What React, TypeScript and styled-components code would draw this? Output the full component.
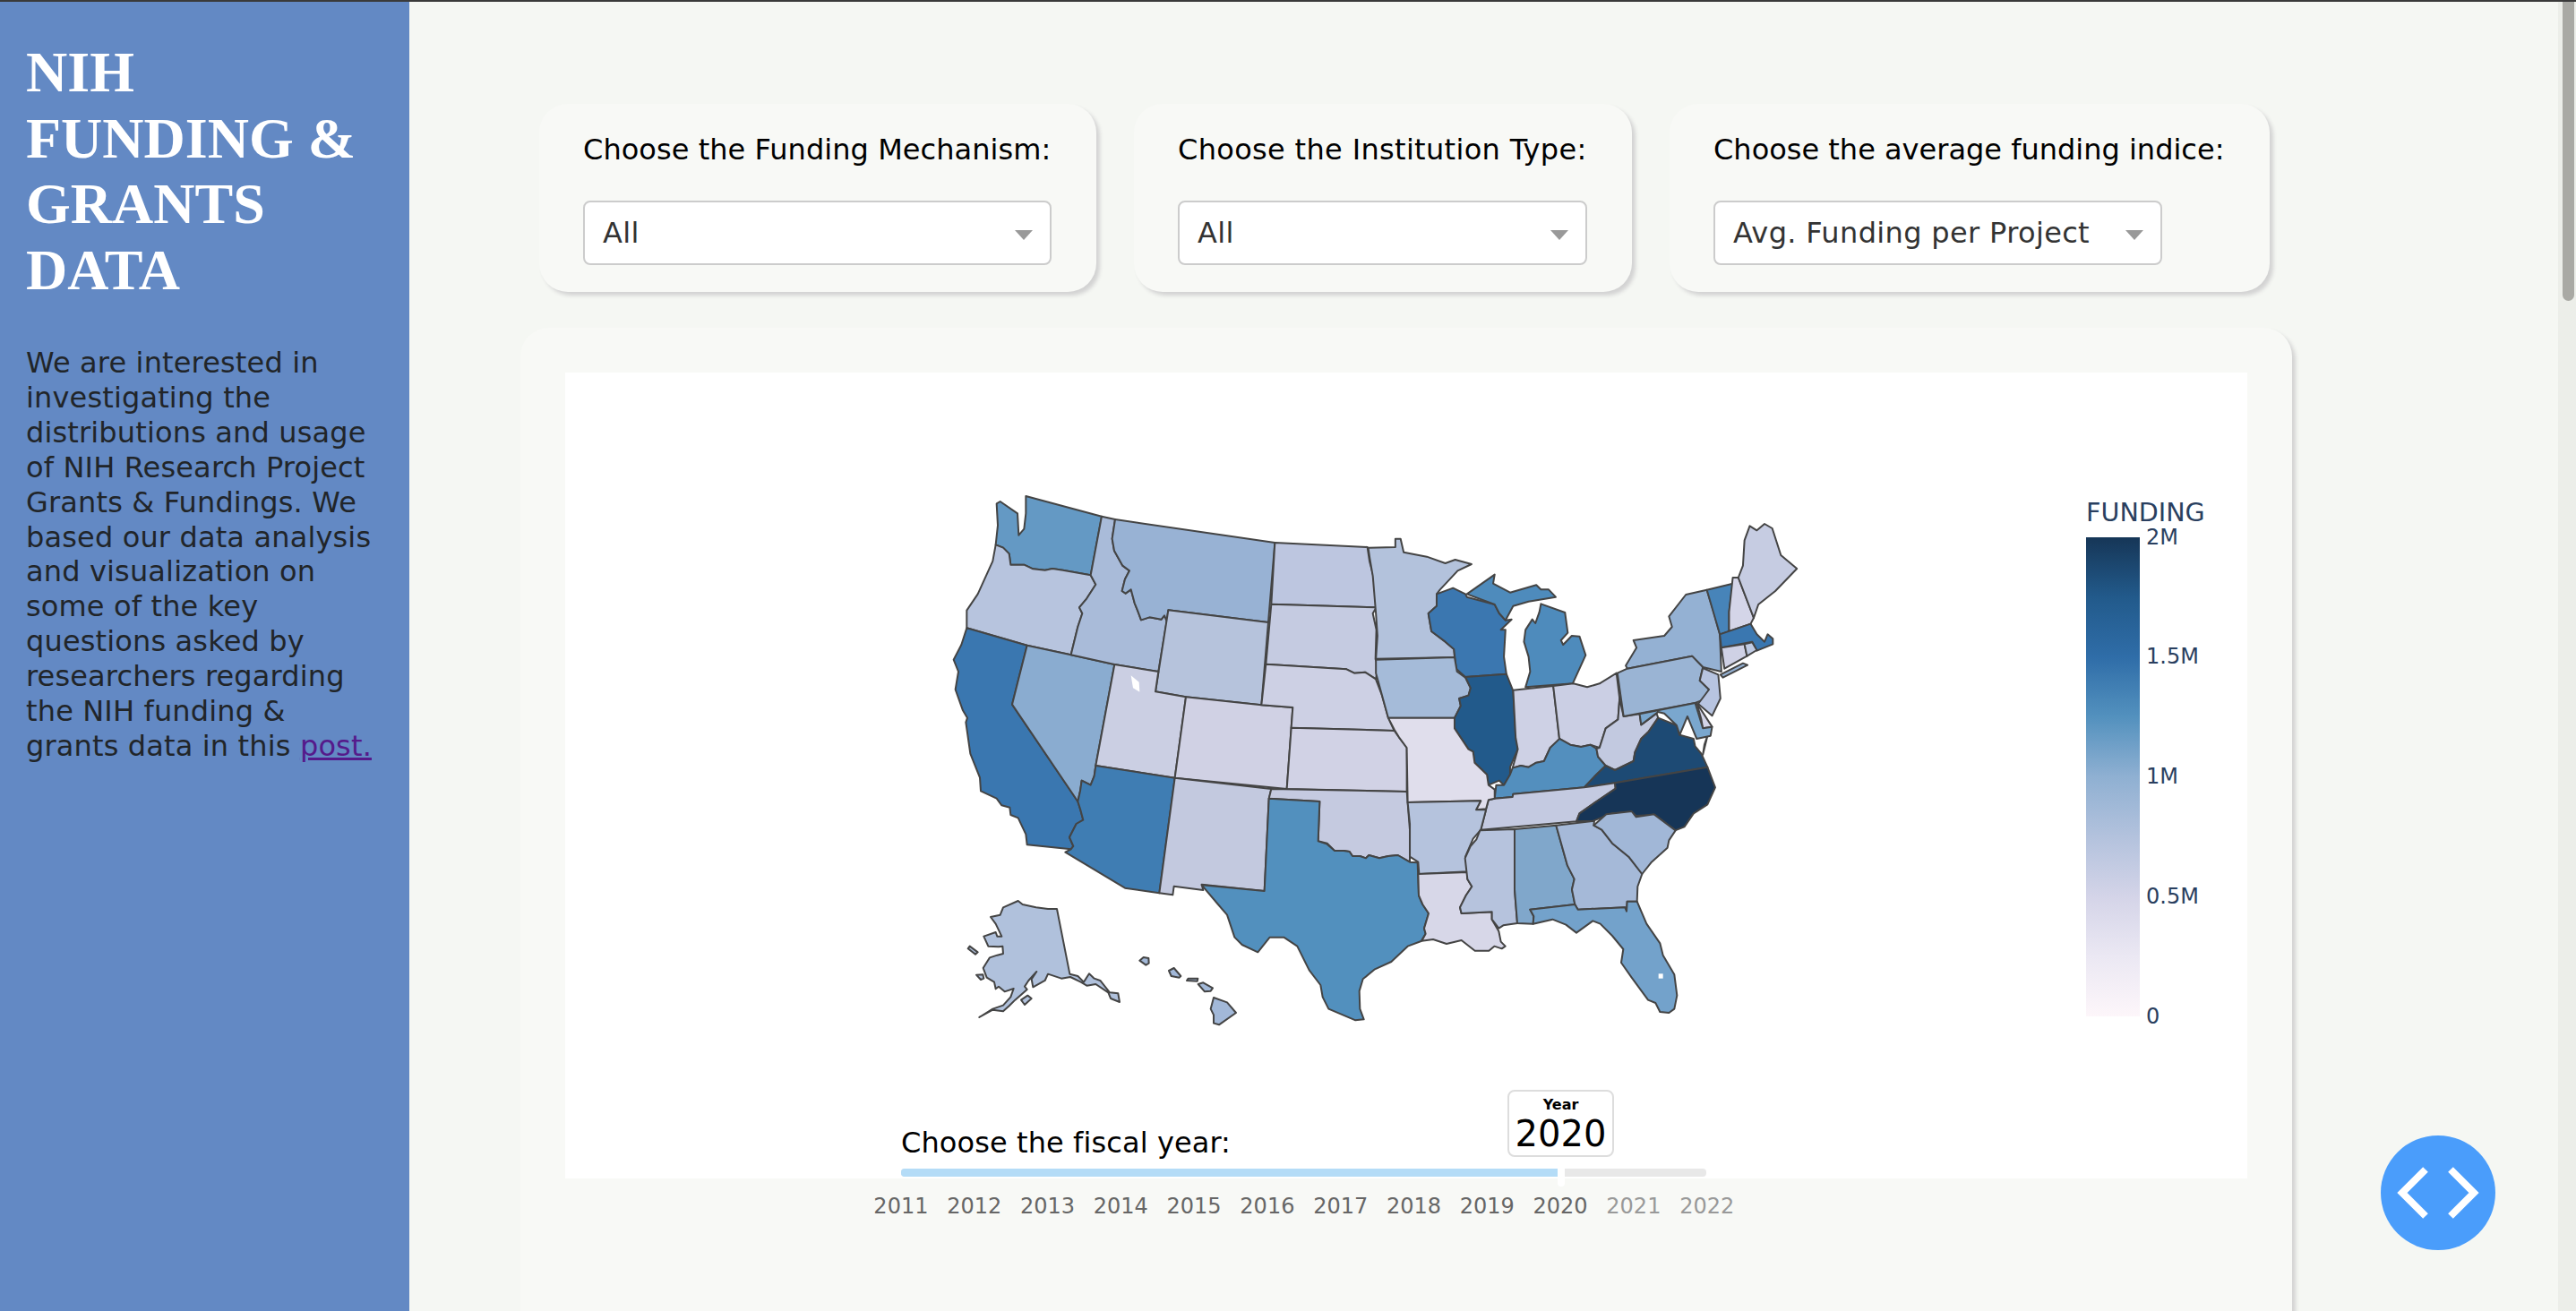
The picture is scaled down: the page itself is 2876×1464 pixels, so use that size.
import React from 'react';
import styled, { createGlobalStyle } from 'styled-components';

const GlobalStyle = createGlobalStyle`
  html, body {
    margin: 0;
    padding: 0;
    height: 100%;
    overflow: hidden;
    background: #f5f7f3;
    font-family: "DejaVu Sans", Verdana, sans-serif;
  }
`;

const Page = styled.div`
  display: flex;
  height: 1462px;
  border-top: 2px solid #3a3a3a;
  overflow: hidden;
`;
const Sidebar = styled.aside`
  flex: 0 0 457px;
  box-sizing: border-box;
  padding: 42px 30px 0 29px;
  background: #6389c4;
`;
const Heading = styled.h1`
  margin: 0 0 48px;
  font-family: "Liberation Serif", "Times New Roman", serif;
  font-size: 64px;
  line-height: 73.5px;
  font-weight: 700;
  color: #fff;
`;
const Intro = styled.p`
  margin: 0;
  font-size: 32px;
  line-height: 38.9px;
  letter-spacing: 0.15px;
  color: #212529;
  a {
    color: #551a8b;
  }
`;
const Content = styled.main`
  flex: 1;
  min-width: 0;
  overflow: hidden;
  padding: 114px 0 0 124px;
`;
const Filters = styled.div`
  display: flex;
  gap: 42px;
  margin: 0 0 40px 21px;
`;
const Card = styled.section`
  background: #f8f9f6;
  border-radius: 32px;
  box-shadow: 4px 4px 4px #d3d3d3;
`;
const FilterCard = styled(Card)<{ $width: number }>`
  flex: none;
  box-sizing: border-box;
  width: ${(p) => p.$width}px;
  height: 210px;
  padding: 32px 50px 30px 49px;
  font-size: 32px;
`;
const FilterLabel = styled.div<{ $tracking: number }>`
  margin-bottom: 37px;
  line-height: 39px;
  letter-spacing: ${(p) => p.$tracking}px;
  color: #000;
  white-space: nowrap;
`;
const SelectBox = styled.div<{ $fit?: boolean }>`
  box-sizing: border-box;
  display: flex;
  align-items: center;
  justify-content: space-between;
  width: ${(p) => (p.$fit ? 'fit-content' : '100%')};
  height: 72px;
  padding: 0 19px 0 20px;
  gap: 40px;
  background: #fff;
  border: 2px solid #ccc;
  border-radius: 8px;
  letter-spacing: 0.35px;
  color: #333;
  white-space: nowrap;
`;
const Caret = styled.span`
  flex: none;
  width: 0;
  height: 0;
  margin-top: 4px;
  border-left: 10px solid transparent;
  border-right: 10px solid transparent;
  border-top: 11px solid #999;
`;
const ChartCard = styled(Card)`
  width: 1978px;
  height: 1200px;
  box-sizing: border-box;
  padding: 50px;
`;
const Plot = styled.div`
  position: relative;
  height: 900px;
  background: #fff;
`;
const MapSvg = styled.svg`
  display: block;
  width: 100%;
  height: 100%;
  polygon {
    stroke: #444;
    stroke-width: 2;
    stroke-linejoin: round;
    vector-effect: non-scaling-stroke;
  }
  text {
    font-family: "DejaVu Sans", Verdana, sans-serif;
    fill: #2a3f5f;
    font-size: 24px;
    dominant-baseline: central;
  }
`;
const Hole = styled.polygon`
  fill: #fff;
  && {
    stroke: none;
  }
`;
const YearSlider = styled.div`
  position: absolute;
  left: 334px;
  top: 801px;
  width: 984px;
`;
const YearBubble = styled.div`
  position: absolute;
  left: 718px;
  top: 0;
  box-sizing: border-box;
  width: 119px;
  height: 75px;
  padding-top: 5px;
  background: #fff;
  border: 2px solid #ddd;
  border-radius: 8px;
  text-align: center;
  color: #000;
`;
const BubbleTitle = styled.div`
  font-size: 16px;
  font-weight: 700;
  line-height: 20px;
`;
const BubbleValue = styled.div`
  font-size: 40px;
  line-height: 44px;
`;
const SliderLabel = styled.div`
  margin: 0 0 9px 41px;
  padding-top: 40px;
  font-size: 32px;
  line-height: 39px;
  letter-spacing: 0.1px;
  color: #000;
`;
const Track = styled.div`
  position: relative;
  display: flex;
  width: 899px;
  height: 9px;
  margin-left: 41px;
  border-radius: 4px;
  background: #e8e8e8;
`;
const TrackFill = styled.div`
  width: 733px;
  border-radius: 4px 0 0 4px;
  background: #b4dcf7;
`;
const Handle = styled.div`
  position: absolute;
  left: 733px;
  top: -13px;
  width: 8px;
  height: 33px;
  border-radius: 0 0 4px 4px;
  background: #fff;
`;
const Ticks = styled.div`
  display: grid;
  grid-template-columns: repeat(12, 81.8px);
  margin-top: 19px;
`;
const Tick = styled.span<{ $muted: boolean }>`
  font-size: 24px;
  line-height: 29px;
  text-align: center;
  color: ${(p) => (p.$muted ? '#999' : '#666')};
`;
const ScrollTrack = styled.div`
  flex: 0 0 20px;
  background: #eceee9;
`;
const ScrollThumb = styled.div`
  width: 13px;
  height: 334px;
  margin-left: 5px;
  border-radius: 0 0 7px 7px;
  background: #a9a9a4;
`;
const CodeButton = styled.button`
  position: fixed;
  left: 2658px;
  top: 1268px;
  width: 128px;
  height: 128px;
  padding: 0;
  border: 0;
  border-radius: 50%;
  background: #4a9dfb;
  svg {
    display: block;
  }
`;

type Shape = { fill: string; pts: string };

// traced at 3x around the western half
const west: Shape[] = [
  { fill: '#6499c4', pts: '316,72 570,140 533,337 440,320 405,315 380,320 340,316 310,302 265,302 260,265 240,245 215,235 222,170 218,97 230,90 288,130 292,203 310,182 316,130' },
  { fill: '#b7c4de', pts: '215,235 240,245 260,265 265,302 310,302 340,316 380,320 405,315 440,320 533,337 550,368 520,415 495,445 505,465 490,510 467,604 320,572 118,514 118,455 155,400 205,290' },
  { fill: '#3a77b0', pts: '118,514 320,572 270,770 490,1095 498,1120 508,1157 485,1170 462,1215 475,1245 467,1255 320,1240 316,1205 290,1150 265,1140 262,1115 235,1108 218,1085 165,1060 162,1015 130,935 115,830 120,815 105,790 80,720 90,660 74,620 100,570' },
  { fill: '#8aacd0', pts: '320,572 467,604 613,636 550,975 545,1010 533,1040 503,1025 498,1060 490,1095 270,770' },
  { fill: '#a9bbd9', pts: '570,140 615,150 605,215 612,255 640,305 663,322 648,350 638,390 650,398 668,385 680,430 690,455 702,487 730,478 770,485 780,472 788,490 760,660 613,636 467,604 490,510 505,465 495,445 520,415 550,368 533,337' },
  { fill: '#98b2d4', pts: '615,150 1150,228 1128,495 793,454 788,490 780,472 770,485 730,478 702,487 690,455 680,430 668,385 650,398 638,390 648,350 663,322 640,305 612,255 605,215' },
  { fill: '#b6c3dc', pts: '793,454 1128,495 1105,772 852,745 750,727' },
  { fill: '#cbcfe3', pts: '613,636 760,660 750,727 852,745 815,1016 550,975' },
  { fill: '#3f7db3', pts: '550,975 815,1016 763,1402 648,1385 448,1265 467,1255 475,1245 462,1215 485,1170 508,1157 498,1120 490,1095 498,1060 503,1025 533,1040 545,1010' },
  { fill: '#d0d1e4', pts: '852,745 1105,772 1210,780 1190,1053 815,1016' },
  { fill: '#c3c9df', pts: '815,1016 1138,1053 1130,1088 1115,1395 905,1373 910,1392 812,1379 808,1408 763,1402' },
  { fill: '#bdc6e0', pts: '1150,228 1460,243 1467,290 1480,340 1490,445 1138,434' },
  { fill: '#c5cbe1', pts: '1138,434 1490,445 1478,465 1490,520 1487,618 1497,640 1488,685 1452,662 1416,665 1390,652 1120,635' },
  { fill: '#cdd0e4', pts: '1120,635 1390,652 1416,665 1452,662 1488,685 1509,740 1530,815 1550,858 1205,848 1210,780 1105,772' },
  { fill: '#d1d2e5', pts: '1205,848 1550,858 1566,880 1592,915 1592,1062 1190,1053' },
  { fill: '#c5cae0', pts: '1138,1053 1592,1062 1602,1190 1602,1298 1562,1275 1530,1278 1500,1285 1465,1275 1455,1285 1435,1278 1410,1278 1400,1263 1380,1260 1350,1260 1325,1235 1295,1228 1300,1095 1130,1085' },
  { fill: '#5290be', pts: '1130,1085 1300,1095 1295,1228 1325,1238 1350,1260 1380,1260 1400,1263 1410,1278 1435,1278 1455,1285 1465,1275 1500,1285 1530,1278 1562,1275 1602,1298 1628,1300 1632,1410 1645,1440 1665,1470 1650,1520 1655,1538 1640,1563 1595,1580 1540,1632 1485,1657 1445,1690 1433,1730 1435,1790 1448,1825 1420,1828 1330,1790 1310,1750 1303,1710 1265,1660 1225,1580 1180,1550 1133,1550 1093,1600 1040,1575 1015,1550 990,1475 960,1440 905,1375 1115,1395' },
  { fill: '#b0c1dc', pts: '420,1455 463,1673 490,1680 510,1700 528,1672 545,1688 565,1695 597,1735 625,1738 630,1767 600,1755 592,1735 550,1707 520,1712 500,1700 465,1683 435,1688 390,1673 380,1695 340,1717 335,1690 352,1665 325,1695 312,1715 320,1725 280,1760 260,1780 240,1798 205,1793 160,1818 205,1790 240,1778 265,1750 275,1722 245,1732 225,1715 215,1723 210,1700 185,1685 173,1653 195,1618 220,1610 240,1605 238,1580 225,1582 190,1580 175,1547 215,1533 220,1547 235,1547 215,1505 198,1482 230,1475 240,1450 290,1428 305,1440 350,1450 390,1455' },
  { fill: '#b0c1dc', pts: '122,1588 128,1580 155,1600 147,1607' },
  { fill: '#b0c1dc', pts: '150,1676 172,1675 175,1688 165,1692' },
  { fill: '#b0c1dc', pts: '300,1760 322,1745 335,1755 312,1776' },
  { fill: '#a2b8d8', pts: '697,1628 710,1617 727,1620 728,1637 718,1643' },
  { fill: '#a2b8d8', pts: '795,1662 812,1653 835,1680 830,1685 803,1680' },
  { fill: '#a2b8d8', pts: '855,1695 860,1688 892,1688 890,1697' },
  { fill: '#a2b8d8', pts: '893,1707 910,1702 942,1720 935,1730 915,1732' },
  { fill: '#a2b8d8', pts: '945,1752 990,1768 1020,1803 963,1843 945,1838 945,1810 935,1790' },
];

const east: Shape[] = [
  { fill: '#b3c2dc', pts: '80,155 168,153 168,125 185,125 195,170 270,185 330,207 362,195 415,210 370,232 345,260 313,295 302,310 302,350 275,375 285,435 330,470 358,495 360,522 105,527 110,450 105,375 95,250 85,190' },
  { fill: '#3b77b0', pts: '302,310 355,290 395,310 400,320 490,345 505,375 525,398 545,395 510,430 525,430 520,520 528,578 395,588 365,560 358,495 330,470 285,435 275,375 302,350' },
  { fill: '#4e8bbc', pts: '400,310 490,245 485,275 540,305 625,280 640,295 665,295 688,320 600,335 550,350 525,398 505,375 490,345' },
  { fill: '#4e8bbc', pts: '640,343 718,372 727,440 705,465 712,480 740,450 765,452 785,515 743,610 590,622 605,570 600,520 585,470 590,430 612,395 622,408 635,370' },
  { fill: '#a5bbd9', pts: '105,530 360,522 368,570 395,590 412,625 405,650 375,660 380,685 360,725 145,725 125,650 105,575' },
  { fill: '#225a8b', pts: '395,588 528,578 550,635 558,790 565,830 540,890 540,915 520,950 505,935 470,950 465,915 425,875 420,838 405,830 360,760 360,725 380,685 375,660 405,650 412,625' },
  { fill: '#ced1e5', pts: '550,632 680,618 700,798 670,825 650,870 625,875 600,890 575,885 548,893 565,830 558,790' },
  { fill: '#cbcfe4', pts: '680,618 745,610 790,622 830,610 885,575 895,660 890,730 850,760 830,825 800,815 770,822 735,815 700,795' },
  { fill: '#538fbe', pts: '700,795 735,815 770,822 800,815 820,828 825,855 850,885 820,915 780,958 550,980 548,990 490,995 495,950 520,950 540,915 548,893 575,885 600,890 625,875 650,870 670,825' },
  { fill: '#c2c9e0', pts: '895,660 908,720 960,712 965,748 1015,710 1020,725 990,770 965,795 945,840 940,870 910,885 880,900 850,885 825,855 820,828 830,825 850,760 890,730' },
  { fill: '#1d4a74', pts: '1020,725 1080,750 1090,782 1135,795 1140,820 1160,845 1180,890 880,943 780,958 820,915 850,885 880,900 910,885 940,870 945,840 965,795 990,770' },
  { fill: '#1d4a74', pts: '1180,785 1165,848 1170,815' },
  { fill: '#c4cae1', pts: '490,995 548,990 550,980 780,958 880,943 882,962 820,1005 765,1045 755,1072 445,1100 470,1000' },
  { fill: '#163557', pts: '1180,890 1205,958 1180,1015 1135,1045 1105,1090 1075,1102 1010,1050 948,1053 935,1040 870,1045 810,1070 755,1072 765,1045 820,1005 882,962 880,943' },
  { fill: '#e0deec', pts: '145,725 360,725 360,760 405,830 420,838 425,875 465,915 470,950 490,965 490,995 470,1000 462,1030 430,1033 445,1003 208,1008 205,825 180,790 165,765' },
  { fill: '#b5c3dd', pts: '208,1008 445,1003 430,1033 462,1033 445,1100 420,1130 395,1190 402,1240 245,1248 242,1208 215,1190 215,1080' },
  { fill: '#94b1d3', pts: '1110,312 1178,296 1200,370 1220,445 1225,570 1165,555 1130,518 920,560 915,550 950,490 940,465 1040,450 1065,420 1055,385' },
  { fill: '#94b1d3', pts: '1222,580 1295,542 1310,548 1230,590' },
  { fill: '#9ab4d4', pts: '888,575 920,560 1130,518 1165,555 1155,600 1185,630 1165,665 1140,675 908,720' },
  { fill: '#b7c4e0', pts: '1165,558 1215,580 1222,660 1195,718 1150,678 1185,630 1155,600' },
  { fill: '#d3d5e8', pts: '1145,675 1195,755 1165,760 1160,730' },
  { fill: '#7aa7ce', pts: '960,712 1140,675 1165,760 1195,755 1190,785 1145,795 1125,745 1115,720 1090,782 1080,750 1040,710 1020,705 965,748' },
  { fill: '#4784b9', pts: '1178,296 1262,275 1250,370 1250,435 1220,445' },
  { fill: '#d4d5e8', pts: '1262,255 1280,255 1330,390 1320,410 1250,435 1250,370' },
  { fill: '#c6cce2', pts: '1280,255 1295,215 1300,130 1317,82 1340,97 1365,75 1390,90 1418,180 1470,225 1400,300 1345,345 1330,390' },
  { fill: '#3a77b0', pts: '1220,445 1320,410 1340,445 1365,470 1375,445 1392,460 1392,478 1340,500 1325,470 1225,490' },
  { fill: '#cfd1e5', pts: '1225,490 1300,478 1308,518 1235,560' },
  { fill: '#c0cbe3', pts: '1300,478 1325,472 1340,498 1308,518' },
];

const south: Shape[] = [
  { fill: '#d7d7e8', pts: '250,378 415,372 415,395 430,420 410,450 390,490 395,510 497,505 497,530 520,570 527,605 542,620 530,628 505,620 487,635 440,635 395,600 345,612 300,597 262,602 275,578 270,560 285,510 265,480 252,450' },
  { fill: '#b6c3dd', pts: '457,232 573,228 573,430 582,543 535,550 520,560 497,530 497,505 395,510 390,490 410,450 430,420 415,395 407,325 425,285 445,262' },
  { fill: '#80a7cb', pts: '573,228 712,215 750,350 773,395 765,430 775,480 625,497 637,520 635,545 582,543 573,430' },
  { fill: '#a5b9d8', pts: '712,215 840,200 838,215 865,230 900,275 955,320 1000,378 985,420 983,470 950,470 948,503 943,490 785,497 775,480 765,430 773,395 750,350' },
  { fill: '#a1b7d7', pts: '838,215 880,178 965,168 980,187 1040,178 1112,232 1090,265 1085,290 1030,340 1000,378 955,320 900,275 865,230' },
  { fill: '#73a2cb', pts: '625,497 775,480 785,497 943,490 948,503 950,470 983,470 1015,545 1060,610 1070,650 1108,715 1117,785 1108,830 1090,843 1060,840 1045,810 1020,800 965,725 930,675 937,630 900,585 860,545 835,535 780,575 745,548 700,530 635,545 637,520' },
];

const colorTicks = [
  { label: '2M', y: 600 },
  { label: '1.5M', y: 733 },
  { label: '1M', y: 867 },
  { label: '0.5M', y: 1001 },
  { label: '0', y: 1135 },
];

const years = [2011, 2012, 2013, 2014, 2015, 2016, 2017, 2018, 2019, 2020, 2021, 2022];

const drawShapes = (shapes: Shape[]) =>
  shapes.map((s) => <polygon key={s.pts} fill={s.fill} points={s.pts} />);

const UsMap = () => (
  <MapSvg viewBox="631 416 1878 900">
    <defs>
      <linearGradient id="funding" x1="0" y1="1" x2="0" y2="0">
        <stop offset="0" stopColor="#fdf6fa" />
        <stop offset="0.125" stopColor="#ebe8f3" />
        <stop offset="0.25" stopColor="#d4d4e8" />
        <stop offset="0.375" stopColor="#b3c2dd" />
        <stop offset="0.5" stopColor="#8fb0d2" />
        <stop offset="0.625" stopColor="#5391be" />
        <stop offset="0.75" stopColor="#2f6da8" />
        <stop offset="0.875" stopColor="#225a8b" />
        <stop offset="1" stopColor="#163657" />
      </linearGradient>
    </defs>
    <g transform="translate(1040 530) scale(0.33333)">
      {drawShapes(west)}
      <Hole points="668,673 695,695 697,728 675,715" />
    </g>
    <g transform="translate(1500 560) scale(0.34435 0.33333)">{drawShapes(east)}</g>
    <g transform="translate(1500 850) scale(0.33333)">
      {drawShapes(south)}
      <Hole points="1055,712 1070,712 1070,728 1055,728" />
    </g>
    <text x="2329" y="572" style={{ fontSize: 28.6 }}>
      FUNDING
    </text>
    <rect x="2329" y="600" width="60" height="535" fill="url(#funding)" />
    {colorTicks.map((t) => (
      <text key={t.label} x="2396" y={t.y}>
        {t.label}
      </text>
    ))}
  </MapSvg>
);

const App = () => (
  <>
    <GlobalStyle />
    <Page>
      <Sidebar>
        <Heading>NIH FUNDING &amp; GRANTS DATA</Heading>
        <Intro>
          We are interested in investigating the distributions and usage of NIH Research Project
          Grants &amp; Fundings. We based our data analysis and visualization on some of the key
          questions asked by researchers regarding the NIH funding &amp; grants data in this{' '}
          <a href="#post">post.</a>
        </Intro>
      </Sidebar>
      <Content>
        <Filters>
          <FilterCard $width={622}>
            <FilterLabel $tracking={0.05}>Choose the Funding Mechanism:</FilterLabel>
            <SelectBox>
              All
              <Caret />
            </SelectBox>
          </FilterCard>
          <FilterCard $width={556}>
            <FilterLabel $tracking={0.33}>Choose the Institution Type:</FilterLabel>
            <SelectBox>
              All
              <Caret />
            </SelectBox>
          </FilterCard>
          <FilterCard $width={670}>
            <FilterLabel $tracking={0}>Choose the average funding indice:</FilterLabel>
            <SelectBox $fit>
              Avg. Funding per Project
              <Caret />
            </SelectBox>
          </FilterCard>
        </Filters>
        <ChartCard>
          <Plot>
            <UsMap />
            <YearSlider>
              <YearBubble>
                <BubbleTitle>Year</BubbleTitle>
                <BubbleValue>2020</BubbleValue>
              </YearBubble>
              <SliderLabel>Choose the fiscal year:</SliderLabel>
              <Track>
                <TrackFill />
                <Handle />
              </Track>
              <Ticks>
                {years.map((y) => (
                  <Tick key={y} $muted={y > 2020}>
                    {y}
                  </Tick>
                ))}
              </Ticks>
            </YearSlider>
          </Plot>
        </ChartCard>
      </Content>
      <ScrollTrack>
        <ScrollThumb />
      </ScrollTrack>
    </Page>
    <CodeButton aria-label="source code">
      <svg width="128" height="128" viewBox="0 0 128 128" fill="none" stroke="#fff" strokeWidth="8">
        <polyline points="50,38 24,64 50,90" />
        <polyline points="78,38 104,64 78,90" />
      </svg>
    </CodeButton>
  </>
);

export default App;
